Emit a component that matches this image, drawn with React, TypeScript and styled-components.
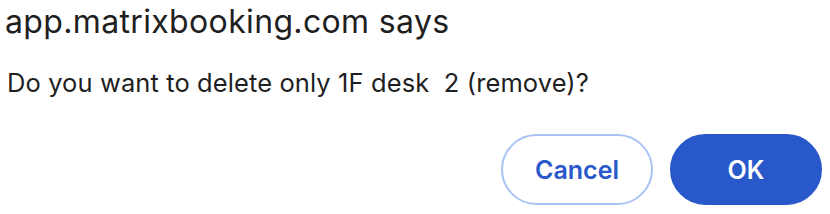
import React from 'react';
import styled, { createGlobalStyle } from 'styled-components';

const GlobalStyle = createGlobalStyle`
  html, body {
    margin: 0;
    padding: 0;
    background: #ffffff;
  }
  body {
    font-family: Inter, 'Liberation Sans', sans-serif;
    -webkit-font-smoothing: antialiased;
  }
`;

const Dialog = styled.div`
  width: 830px;
  height: 214px;
  box-sizing: border-box;
  padding: 2px 8px 0 5px;
  display: flex;
  flex-direction: column;
  color: #1f1f1f;
`;

const Title = styled.h1`
  margin: 0;
  font-size: 32px;
  font-weight: 400;
  line-height: 39px;
  letter-spacing: 0.35px;
`;

const Message = styled.p`
  margin: 26px 0 0 2px;
  font-size: 25.5px;
  font-weight: 400;
  line-height: 31px;
  letter-spacing: 0.1px;
`;

const Actions = styled.div`
  display: flex;
  justify-content: flex-end;
  gap: 17px;
  margin-top: 36px;
`;

const PillButton = styled.button<{ $primary?: boolean }>`
  width: 152px;
  height: 71px;
  border-radius: 36px;
  box-sizing: border-box;
  font-family: Inter, 'Liberation Sans', sans-serif;
  font-size: 25px;
  font-weight: 600;
  cursor: pointer;
  border: 2px solid ${(p) => (p.$primary ? '#2858c9' : '#a9c3f2')};
  background: ${(p) => (p.$primary ? '#2858c9' : '#ffffff')};
  color: ${(p) => (p.$primary ? '#ffffff' : '#2858c9')};
`;

const App = () => {
  return (
    <>
      <GlobalStyle />
      <Dialog>
        <Title>app.matrixbooking.com says</Title>
        <Message>Do you want to delete only 1F desk&nbsp;&nbsp;2 (remove)?</Message>
        <Actions>
          <PillButton>Cancel</PillButton>
          <PillButton $primary>OK</PillButton>
        </Actions>
      </Dialog>
    </>
  );
};

export default App;
